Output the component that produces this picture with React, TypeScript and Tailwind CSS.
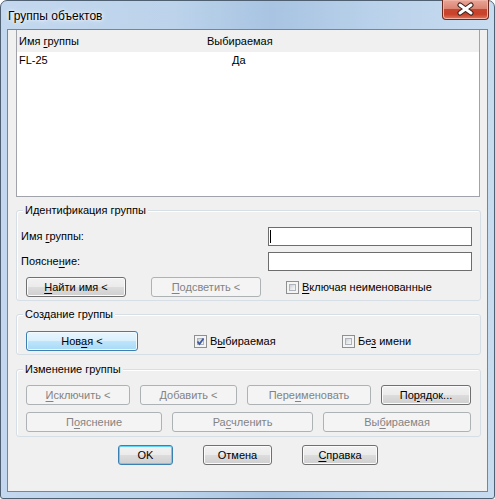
import type { ReactNode } from 'react';

type Kind = 'normal' | 'disabled' | 'focus' | 'default';

const kinds: Record<Kind, string> = {
    normal: 'border-[#707070] text-black bg-[linear-gradient(#f2f2f2_0%,#ebebeb_50%,#dddddd_50%,#cfcfcf_100%)] shadow-[inset_0_0_0_1px_#fbfbfb]',
    disabled: 'border-[#adb2b5] text-[#838383] bg-[#f4f4f4]',
    focus: 'border-[#3c7fb1] text-black bg-[linear-gradient(#eaf6fd_0%,#d9f0fc_50%,#bee6fd_50%,#a7d9f5_100%)] shadow-[inset_0_0_0_1px_#f2fafe]',
    default: 'border-[#3c7fb1] text-black bg-[linear-gradient(#f2f2f2_0%,#ebebeb_50%,#dddddd_50%,#cfcfcf_100%)] shadow-[inset_0_0_0_1px_#5fd3f7]',
};

const Btn = ({ w, kind = 'normal', className = '', children }: { w: string; kind?: Kind; className?: string; children: ReactNode }) => (
    <div className={`h-[20px] ${w} ${className} shrink-0 flex items-center justify-center rounded-[3px] border leading-none ${kinds[kind]}`}>
        {children}
    </div>
);

const U = ({ children }: { children: ReactNode }) => <span className="underline underline-offset-[2px]">{children}</span>;

const Check = ({ checked = false }: { checked?: boolean }) => (
    <div className="relative w-[13px] h-[13px] shrink-0 border border-[#8e8f8f] bg-[#f4f4f4] p-[2px]">
        <div className="w-full h-full border border-[#aeb3b9] bg-[linear-gradient(135deg,#cbcfd5_0%,#e6e8eb_50%,#f7f7f7_100%)]" />
        {checked && (
            <svg className="absolute left-0 top-0" width="11" height="11" viewBox="0 0 11 11">
                <path d="M2.5 5.5 L4.5 8 L8.5 2.5" fill="none" stroke="#3e5aa0" strokeWidth="1.8" />
            </svg>
        )}
    </div>
);

const Group = ({ title, className, children }: { title: string; className: string; children: ReactNode }) => (
    <div className={`relative w-[465px] shrink-0 rounded-[3px] border border-[#d5dfe5] shadow-[inset_1px_1px_0_#ffffff] ${className}`}>
        <span className="absolute left-[6px] -top-[8px] px-[2px] bg-[#f0f0f0] leading-[14px]">{title}</span>
        {children}
    </div>
);

const Input = ({ cursor = false }: { cursor?: boolean }) => (
    <div className="w-[204px] h-[19px] mr-[8px] shrink-0 border border-[#6d6d6d] bg-white flex items-center pl-[1px]">
        {cursor && <div className="w-[1px] h-[13px] bg-black" />}
    </div>
);

export default function App() {
    return (
        <div className="w-[495px] h-[499px] font-['Liberation_Sans',Arial,sans-serif] text-[11px] text-black">
            <div className="w-full h-full flex flex-col rounded-t-[7px] rounded-b-[3px] border border-[#4f6073] bg-[linear-gradient(90deg,#c3d8ee_0%,#bcd3eb_35%,#a8c4e2_55%,#b9d1ea_75%,#c8dcf0_100%)]">
                {/* title bar */}
                <div className="h-[28px] shrink-0 flex items-start">
                    <span className="mt-[8px] ml-[7px] text-[12px] leading-[14px] [text-shadow:0_0_6px_#ffffff,0_0_3px_#ffffff]">Группы объектов</span>
                    <div className="ml-auto mr-[5px] -mt-[1px] w-[47px] h-[20px] rounded-b-[4px] border border-t-0 border-[#6b2a20] bg-[linear-gradient(#eaa597_0%,#da8574_45%,#c8462f_50%,#c94129_75%,#e0795c_100%)] shadow-[inset_0_0_0_1px_#f0b3a6]">
                        <svg width="45" height="19" viewBox="0 0 45 19">
                            <path d="M17 5 L28 13 M28 5 L17 13" stroke="#3b1e19" strokeWidth="5" strokeLinecap="round" />
                            <path d="M17 5 L28 13 M28 5 L17 13" stroke="#ffffff" strokeWidth="3" strokeLinecap="round" />
                        </svg>
                    </div>
                </div>

                {/* client */}
                <div className="mx-[6px] h-[463px] shrink-0 border border-[#74869b] bg-[#f0f0f0] flex flex-col pl-[8px]">
                    {/* list */}
                    <div className="w-[464px] h-[167px] shrink-0 border border-t-0 border-[#a0a4aa] flex flex-col">
                        <div className="h-[22px] shrink-0 flex items-center">
                            <span className="ml-[2px] w-[188px]">
                                Имя <U>г</U>руппы
                            </span>
                            <span>Выбираемая</span>
                        </div>
                        <div className="flex-1 bg-white">
                            <div className="h-[16px] flex items-center">
                                <span className="ml-[2px] w-[213px]">FL-25</span>
                                <span>Да</span>
                            </div>
                        </div>
                    </div>

                    <Group title="Идентификация группы" className="mt-[13px] h-[91px]">
                        <div className="mt-[16px] h-[19px] flex items-center">
                            <span className="flex-1 pl-[4px]">
                                Имя <U>г</U>руппы:
                            </span>
                            <Input cursor />
                        </div>
                        <div className="mt-[6px] h-[19px] flex items-center">
                            <span className="flex-1 pl-[4px]">
                                Поясне<U>н</U>ие:
                            </span>
                            <Input />
                        </div>
                        <div className="mt-[6px] flex items-center pl-[9px]">
                            <Btn w="w-[100px]">
                                <span>
                                    <U>Н</U>айти имя &lt;
                                </span>
                            </Btn>
                            <Btn w="w-[110px]" kind="disabled" className="ml-[25px]">
                                <span>
                                    <U>П</U>одсветить &lt;
                                </span>
                            </Btn>
                            <div className="ml-[25px]">
                                <Check />
                            </div>
                            <span className="ml-[3px]">
                                <U>В</U>ключая неименованные
                            </span>
                        </div>
                    </Group>

                    <Group title="Создание группы" className="mt-[13px] h-[41px]">
                        <div className="mt-[16px] flex items-center pl-[9px]">
                            <Btn w="w-[112px]" kind="focus">
                                <span>
                                    Нов<U>а</U>я &lt;
                                </span>
                            </Btn>
                            <div className="ml-[56px]">
                                <Check checked />
                            </div>
                            <span className="w-[135px] pl-[3px]">
                                В<U>ы</U>бираемая
                            </span>
                            <Check />
                            <span className="ml-[3px]">
                                Бе<U>з</U> имени
                            </span>
                        </div>
                    </Group>

                    <Group title="Изменение группы" className="mt-[14px] h-[68px]">
                        <div className="mt-[15px] flex items-center pl-[9px] gap-[10px]">
                            <Btn w="w-[104px]" kind="disabled">
                                <span>
                                    <U>И</U>сключить &lt;
                                </span>
                            </Btn>
                            <Btn w="w-[97px]" kind="disabled">
                                <span>
                                    <U>Д</U>обавить &lt;
                                </span>
                            </Btn>
                            <Btn w="w-[124px]" kind="disabled">
                                <span>
                                    Пере<U>и</U>меновать
                                </span>
                            </Btn>
                            <Btn w="w-[90px]">
                                <span>
                                    По<U>р</U>ядок...
                                </span>
                            </Btn>
                        </div>
                        <div className="mt-[7px] flex items-center pl-[9px] gap-[10px]">
                            <Btn w="w-[136px]" kind="disabled">
                                <span>
                                    П<U>о</U>яснение
                                </span>
                            </Btn>
                            <Btn w="w-[141px]" kind="disabled">
                                <span>
                                    Ра<U>с</U>членить
                                </span>
                            </Btn>
                            <Btn w="w-[148px]" kind="disabled">
                                <span>
                                    Вы<U>б</U>ираемая
                                </span>
                            </Btn>
                        </div>
                    </Group>

                    <div className="mt-[8px] flex items-center pl-[102px]">
                        <Btn w="w-[55px]" kind="default">
                            OK
                        </Btn>
                        <Btn w="w-[69px]" className="ml-[30px]">
                            Отмена
                        </Btn>
                        <Btn w="w-[76px]" className="ml-[30px]">
                            <span>
                                <U>С</U>правка
                            </span>
                        </Btn>
                    </div>
                </div>
            </div>
        </div>
    );
}
